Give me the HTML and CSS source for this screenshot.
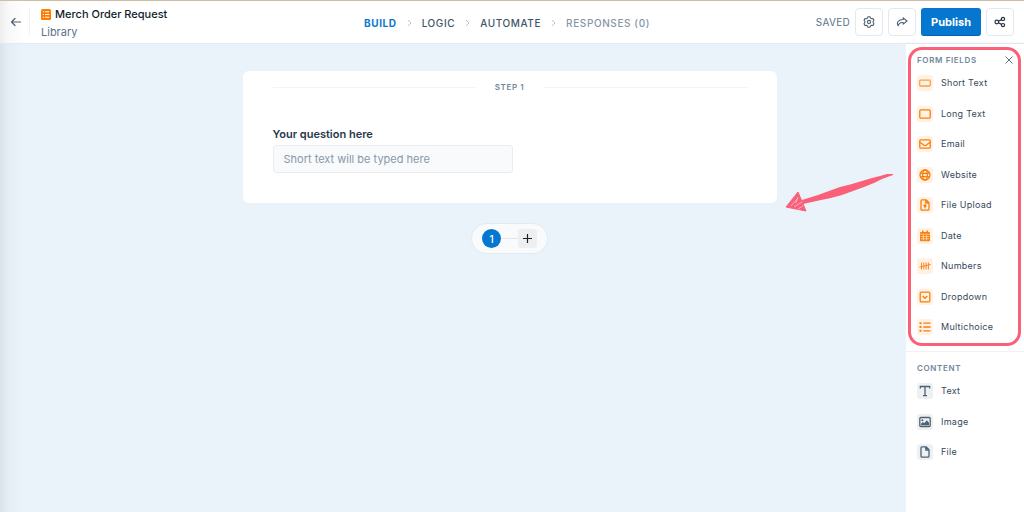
FILE: index.html
```html
<!DOCTYPE html>
<html lang="en">
<head>
  <meta charset="UTF-8">
  <meta name="viewport" content="width=device-width, initial-scale=1.0">
  <title>Merch Order Request</title>
  <link rel="stylesheet" href="styles.css">
</head>
<body>
  <header class="topbar">
    <div class="topbar-left">
      <a class="back" href="#" aria-label="Back">
        <svg width="12" height="12" viewBox="0 0 12 12" fill="none" stroke="currentColor" stroke-width="1.2" stroke-linecap="round" stroke-linejoin="round"><path d="M10.5 6H1.5M5 2.5L1.5 6L5 9.5"/></svg>
      </a>
      <div class="doc">
        <h1 class="doc-title">
          <svg width="10" height="11" viewBox="0 0 10 11"><rect width="10" height="11" rx="1.5" fill="#ff7a00"/><path d="M1.8 2.8h1.2M4 2.8H8.2M1.8 5.5h1.2M4 5.5H8.2M1.8 8.2h1.2M4 8.2H8.2" stroke="#fff" stroke-width="1.1"/></svg>
          Merch Order Request
        </h1>
        <a class="doc-folder" href="#">Library</a>
      </div>
    </div>

    <nav class="steps">
      <a class="active" href="#">Build</a>
      <svg class="chevron" width="5" height="8" viewBox="0 0 5 8"><path d="M1 1l3 3l-3 3"/></svg>
      <a href="#">Logic</a>
      <svg class="chevron" width="5" height="8" viewBox="0 0 5 8"><path d="M1 1l3 3l-3 3"/></svg>
      <a href="#">Automate</a>
      <svg class="chevron" width="5" height="8" viewBox="0 0 5 8"><path d="M1 1l3 3l-3 3"/></svg>
      <a class="muted" href="#">Responses (0)</a>
    </nav>

    <div class="topbar-right">
      <span class="saved">Saved</span>
      <button class="icon-btn" type="button" aria-label="Settings">
        <svg width="12" height="12" viewBox="0 0 12 12" fill="none" stroke="currentColor" stroke-width="1.1" stroke-linejoin="round"><path d="M5 0.8H7L7.5 2.1L8.6 2.7L10 2.5L11 4.2L10.2 5.3V6.7L11 7.8L10 9.5L8.6 9.3L7.5 9.9L7 11.2H5L4.5 9.9L3.4 9.3L2 9.5L1 7.8L1.8 6.7V5.3L1 4.2L2 2.5L3.4 2.7L4.5 2.1Z"/><circle cx="6" cy="6" r="1.6"/></svg>
      </button>
      <button class="icon-btn" type="button" aria-label="Preview">
        <svg width="12" height="12" viewBox="0 0 12 12" fill="none" stroke="currentColor" stroke-width="1.1" stroke-linecap="round" stroke-linejoin="round"><path d="M7.2 1.8L11 5L7.2 8.2V6.5C4.6 6.2 2.8 7 2.2 9.8C0.2 6.8 2.4 3.4 7.2 3.5Z"/></svg>
      </button>
      <button class="publish" type="button">Publish</button>
      <button class="icon-btn dark" type="button" aria-label="Share">
        <svg width="12" height="12" viewBox="0 0 12 12" fill="none" stroke="currentColor" stroke-width="1.2"><circle cx="2.8" cy="6" r="1.8"/><circle cx="9" cy="2.9" r="1.6"/><circle cx="9" cy="9.1" r="1.6"/><path d="M4.4 5.2L7.6 3.6M4.4 6.8L7.6 8.4"/></svg>
      </button>
    </div>
  </header>

  <div class="workspace">
    <main class="canvas">
      <section class="card">
        <h2 class="card-step">Step 1</h2>
        <div class="question">
          <label for="q1">Your question here</label>
          <input type="text" id="q1" placeholder="Short text will be typed here">
        </div>
      </section>

      <div class="pager">
        <button class="page-num" type="button">1</button>
        <span class="page-line"></span>
        <button class="page-add" type="button" aria-label="Add step">
          <svg width="9" height="9" viewBox="0 0 9 9" stroke="currentColor" stroke-width="1.2"><path d="M4.5 0v9M0 4.5h9"/></svg>
        </button>
      </div>

      <svg class="arrow" width="110" height="42" viewBox="0 0 110 42" fill="#fb6079">
        <path d="M109 2L103 2L96 4L88 6L78 9L68 12L56 15L45 19L34 23L18 28L19 32L28 30L37 28L47 26L58 23L69 19L80 15L90 11L98 7L109 3Z"/>
        <path d="M14 20L22 39L2 35Z" stroke="#fb6079" stroke-width="1" stroke-linejoin="round"/>
        <path d="M7 34L14 26M10 35L18 30M14 37L19 34M12 31L14 25" stroke="#eec3d0" stroke-width="0.8" fill="none"/>
      </svg>
    </main>

    <aside class="sidebar">
      <section class="panel highlighted">
        <div class="panel-head">
          <h3>Form fields</h3>
          <button class="close" type="button" aria-label="Close">
            <svg width="8" height="8" viewBox="0 0 8 8" stroke="currentColor" stroke-width="1"><path d="M0.5 0.5l7 7M7.5 0.5l-7 7"/></svg>
          </button>
        </div>
        <ul class="fields">
          <li><button type="button"><span class="tile"><svg viewBox="0 0 12 12"><rect x="0.7" y="3.2" width="10.6" height="5.8" rx="0.8" stroke="#f9a04c"/></svg></span>Short Text</button></li>
          <li><button type="button"><span class="tile"><svg viewBox="0 0 12 12"><rect x="0.8" y="1.8" width="10.4" height="8.4" rx="1"/></svg></span>Long Text</button></li>
          <li><button type="button"><span class="tile"><svg viewBox="0 0 12 12"><rect x="0.8" y="1.8" width="10.4" height="8.4" rx="1"/><path d="M1 4.2L5 7.2Q6 7.9 7 7.2L11 4.2"/></svg></span>Email</button></li>
          <li><button type="button"><span class="tile"><svg viewBox="0 0 12 12"><circle cx="6" cy="6" r="5"/><ellipse cx="6" cy="6" rx="2.3" ry="5"/><path d="M1.3 4.3h9.4M1.3 7.7h9.4"/></svg></span>Website</button></li>
          <li><button type="button"><span class="tile"><svg viewBox="0 0 12 12"><path d="M2.9 0.8H7L10 3.8V10.2Q10 11.2 9 11.2H2.9Q2 11.2 2 10.2V1.8Q2 0.8 2.9 0.8ZM6.8 1V4H10M6 9.3V6M4.5 7.2L6 5.7L7.5 7.2"/></svg></span>File Upload</button></li>
          <li><button type="button"><span class="tile"><svg viewBox="0 0 12 12"><path class="solid" d="M3 0.5h1.5V2h3V0.5H9V2h1Q11 2 11 3v7.3q0 1-1 1H2q-1 0-1-1V3Q1 2 2 2h1Z"/><path d="M1 4.2h10M1.8 6.6h8.4M1.8 8.8h8.4M4.4 4.5v6M7.6 4.5v6" stroke="#fff1e4" stroke-width="0.6"/></svg></span>Date</button></li>
          <li><button type="button"><span class="tile"><svg viewBox="0 0 12 12"><path d="M2.5 2.5v7M4.8 2.5v7M7.1 2.5v7M9.4 2.5v7M0.3 7.3L11.7 4.4" stroke-width="0.9"/></svg></span>Numbers</button></li>
          <li><button type="button"><span class="tile"><svg viewBox="0 0 12 12"><rect x="1.2" y="1.2" width="9.6" height="9.6" rx="1.2"/><path d="M3.7 5L6 7.2L8.3 5"/></svg></span>Dropdown</button></li>
          <li><button type="button"><span class="tile"><svg viewBox="0 0 12 12"><path d="M4.3 2.2h7.2M4.3 6h7.2M4.3 9.8h7.2"/><path class="solid" d="M0.5 1.2h2v2h-2ZM0.5 5h2v2h-2ZM0.5 8.8h2v2h-2Z"/></svg></span>Multichoice</button></li>
        </ul>
      </section>

      <section class="panel content">
        <div class="panel-head">
          <h3>Content</h3>
        </div>
        <ul class="fields short">
          <li><button type="button"><span class="tile grey"><svg viewBox="0 0 12 12"><path d="M1.3 3.6V1.5H10.7V3.6M6 1.5V10.5M4 10.6H8"/></svg></span>Text</button></li>
          <li><button type="button"><span class="tile grey"><svg viewBox="0 0 12 12"><rect x="0.8" y="1.5" width="10.4" height="9" rx="1"/><circle class="solid" cx="3.4" cy="4.2" r="1"/><path class="solid" d="M2 9.3V7.8L4 6L5.2 7.2L7.8 4.2L10 6.8V9.3Z"/></svg></span>Image</button></li>
          <li><button type="button"><span class="tile grey"><svg viewBox="0 0 12 12"><path d="M2.9 0.8H7L10 3.8V10.2Q10 11.2 9 11.2H2.9Q2 11.2 2 10.2V1.8Q2 0.8 2.9 0.8ZM6.8 1V4H10"/></svg></span>File</button></li>
        </ul>
      </section>
    </aside>
  </div>
</body>
</html>
```
FILE: styles.css
```css
* {
  box-sizing: border-box;
}
body {
  margin: 0;
  min-height: 100vh;
  display: flex;
  flex-direction: column;
  font-family: Inter, "Liberation Sans", sans-serif;
  font-size: 10px;
  color: #37475a;
  background: #eaf3fa;
}
h1, h2, h3, ul {
  margin: 0;
  padding: 0;
}
a {
  color: inherit;
  text-decoration: none;
}
button, input {
  font-family: inherit;
  font-size: inherit;
  color: inherit;
}
button {
  padding: 0;
  border: none;
  background: none;
  cursor: pointer;
}
svg {
  display: block;
  flex-shrink: 0;
}

/* top bar */
.topbar {
  display: grid;
  grid-template-columns: 1fr auto 1fr;
  align-items: center;
  height: 44px;
  padding-right: 10px;
  background: linear-gradient(to right, #ededee, #f8f8f9 8px, #fff 24px);
  border-top: 1px solid #cdbfa6;
  border-bottom: 1px solid #e4ebf1;
}
.topbar-left {
  display: flex;
  align-items: center;
}
.back {
  display: flex;
  align-items: center;
  width: 30px;
  height: 26px;
  padding-left: 10px;
  border-right: 1px solid #f0f1f3;
  color: #4a6072;
}
.doc {
  padding-top: 2px;
  padding-left: 11px;
}
.doc-title {
  display: flex;
  align-items: center;
  gap: 4px;
  font-size: 11px;
  font-weight: 500;
  line-height: 18px;
  color: #0f1d2b;
}
.doc-folder {
  display: block;
  font-size: 11px;
  line-height: 18px;
  color: #5d7184;
}
.steps {
  display: flex;
  align-items: center;
  gap: 10px;
  padding-top: 1px;
  font-weight: 500;
  letter-spacing: 0.06em;
  text-transform: uppercase;
  color: #3f5466;
}
.steps .active {
  font-weight: 700;
  color: #0a77cc;
}
.steps .muted {
  color: #8696a5;
}
.chevron {
  fill: none;
  stroke: #b9c6d1;
}
.topbar-right {
  display: flex;
  justify-content: flex-end;
  align-items: center;
  gap: 5px;
}
.saved {
  letter-spacing: 0.03em;
  text-transform: uppercase;
  color: #5d7184;
}
.icon-btn {
  display: flex;
  align-items: center;
  justify-content: center;
  width: 28px;
  height: 28px;
  border: 1px solid #e3e9ef;
  border-radius: 4px;
  color: #4a6072;
}
.icon-btn.dark {
  color: #26333f;
}
.publish {
  height: 28px;
  padding: 0 10px;
  border-bottom: 1px solid #0565b3;
  border-radius: 3px;
  background: #0577ce;
  color: #fff;
  font-size: 11px;
  font-weight: 700;
}

/* form canvas */
.workspace {
  display: flex;
  flex: 1;
}
.canvas {
  position: relative;
  flex: 1;
  display: flex;
  flex-direction: column;
  align-items: center;
  padding: 27px 16px 27px 129px;
  background: linear-gradient(to right, #d9e2e9, #e4edf4 8px, #eaf3fa 24px);
}
.card {
  width: 100%;
  max-width: 534px;
  padding: 10px 30px 30px;
  border-radius: 6px;
  background: #fff;
}
.card-step {
  display: flex;
  align-items: center;
  gap: 20px;
  font-size: 8px;
  font-weight: 600;
  line-height: 12px;
  letter-spacing: 0.08em;
  text-transform: uppercase;
  color: #73879a;
}
.card-step::before,
.card-step::after {
  content: "";
  flex: 1;
  height: 1px;
  background: #f1f4f6;
}
.question {
  display: flex;
  flex-direction: column;
  align-items: flex-start;
  gap: 3px;
  padding-top: 33px;
}
.question label {
  font-size: 11px;
  font-weight: 600;
  line-height: 16px;
  color: #26384a;
}
.question input {
  width: 240px;
  max-width: 100%;
  height: 28px;
  padding: 0 10px;
  border: 1px solid #e9edf1;
  border-radius: 3px;
  background: #f9fafb;
  font-size: 11px;
}
.question input::placeholder {
  color: #8799aa;
}
.pager {
  display: flex;
  align-items: center;
  margin-top: 20px;
  padding: 5px 10px;
  border: 1px solid #e3eaf0;
  border-radius: 15px;
  background: #f9fafc;
}
.page-num {
  width: 19px;
  height: 19px;
  border-radius: 50%;
  background: #0577ce;
  color: #fff;
  font-weight: 500;
}
.page-line {
  width: 17px;
  height: 1px;
  background: #e4e8ec;
}
.page-add {
  display: flex;
  align-items: center;
  justify-content: center;
  width: 19px;
  height: 19px;
  border-radius: 3px;
  background: #eeeff1;
  color: #1b2229;
}
.arrow {
  position: absolute;
  top: 128px;
  right: 12px;
}

/* field list */
.sidebar {
  width: 118px;
  background: #fff;
  box-shadow: 0 0 3px #d5e0ea;
}
.panel {
  padding: 8px 11px;
}
.panel.highlighted {
  margin: 3px 3px 5px 2px;
  padding: 2px 5px 8px 6px;
  border: 3px solid #fb6079;
  border-radius: 14px;
}
.panel.content {
  border-top: 1px solid #eef2f5;
}
.panel-head {
  display: flex;
  align-items: center;
  justify-content: space-between;
  height: 15px;
}
.panel-head h3 {
  font-size: 8px;
  font-weight: 600;
  letter-spacing: 0.08em;
  white-space: nowrap;
  text-transform: uppercase;
  color: #73879a;
}
.close {
  color: #5d7184;
}
.fields {
  display: flex;
  flex-direction: column;
  justify-content: space-between;
  min-height: 260px;
  margin-top: 8px;
  list-style: none;
}
.fields.short {
  min-height: 77px;
}
.fields button {
  display: flex;
  align-items: center;
  gap: 8px;
  font-size: 9px;
  line-height: 16px;
  letter-spacing: 0.03em;
  white-space: nowrap;
}
.tile {
  display: flex;
  align-items: center;
  justify-content: center;
  width: 16px;
  height: 16px;
  border-radius: 3px;
  background: #fff1e4;
  color: #f77f0a;
}
.tile.grey {
  background: #eef0f2;
  color: #4b6275;
}
.tile svg {
  width: 12px;
  height: 12px;
  fill: none;
  stroke: currentColor;
  stroke-width: 1.3;
  stroke-linejoin: round;
}
.tile .solid {
  fill: currentColor;
  stroke: none;
}
```
